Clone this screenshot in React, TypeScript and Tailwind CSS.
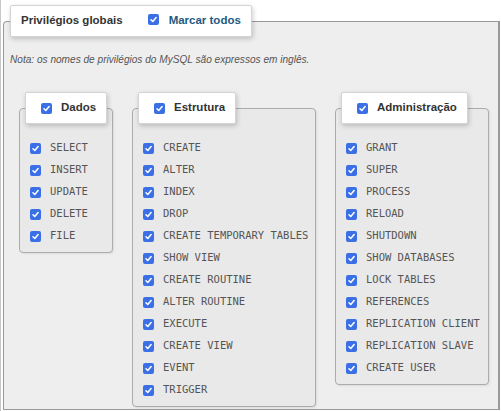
import React from 'react';

const groups = [
  {
    title: 'Dados',
    box: 'w-[94px]',
    items: ['SELECT', 'INSERT', 'UPDATE', 'DELETE', 'FILE'],
  },
  {
    title: 'Estrutura',
    box: 'w-[184px]',
    items: [
      'CREATE',
      'ALTER',
      'INDEX',
      'DROP',
      'CREATE TEMPORARY TABLES',
      'SHOW VIEW',
      'CREATE ROUTINE',
      'ALTER ROUTINE',
      'EXECUTE',
      'CREATE VIEW',
      'EVENT',
      'TRIGGER',
    ],
  },
  {
    title: 'Administração',
    box: 'w-[154px]',
    items: [
      'GRANT',
      'SUPER',
      'PROCESS',
      'RELOAD',
      'SHUTDOWN',
      'SHOW DATABASES',
      'LOCK TABLES',
      'REFERENCES',
      'REPLICATION CLIENT',
      'REPLICATION SLAVE',
      'CREATE USER',
    ],
  },
];

function Check() {
  return (
    <span className="inline-flex h-[11px] w-[11px] shrink-0 items-center justify-center rounded-[2px] bg-[#3b6fe6]">
      <svg viewBox="0 0 10 10" className="h-[9px] w-[9px]">
        <path
          d="M2.2 5.3 L4.2 7.2 L7.9 2.8"
          fill="none"
          stroke="white"
          strokeWidth="1.7"
          strokeLinecap="round"
          strokeLinejoin="round"
        />
      </svg>
    </span>
  );
}

function Legend({ children }: { children: React.ReactNode }) {
  return (
    <div className="relative z-10 flex h-[32px] items-center self-start rounded-[2px] border border-[#d4d4d4] bg-white shadow-[1px_2px_5px_rgba(0,0,0,0.2)]">
      {children}
    </div>
  );
}

function Group({ title, box, items }: { title: string; box: string; items: string[] }) {
  return (
    <div className={`flex flex-col ${box}`}>
      <div className="ml-[6px] flex">
        <Legend>
          <div className="flex items-center gap-[9px] pl-[15px] pr-[10px] text-[11.5px] font-bold text-[#333]">
            <Check />
            <span>{title}</span>
          </div>
        </Legend>
      </div>
      <div className="-mt-[16px] rounded-[4px] border border-[#acacac] bg-[#e9e9e9] pb-[5px] pl-[10px] pt-[28px] shadow-[1px_1px_2px_rgba(0,0,0,0.08)]">
        {items.map((it) => (
          <div key={it} className="flex h-[22px] items-center gap-[9px]">
            <Check />
            <span className="font-['DejaVu_Sans_Mono',monospace] text-[10.5px] text-[#555]">
              {it}
            </span>
          </div>
        ))}
      </div>
    </div>
  );
}

export default function App() {
  return (
    <div className="h-[411px] w-[501px] overflow-hidden border-l border-[#c8c8c8] bg-white pl-[2px] pt-[5px] font-['Liberation_Sans',Arial,sans-serif]">
      <div className="flex flex-col">
        <div className="ml-[7px] flex">
          <Legend>
            <div className="flex h-full items-center pl-[10px] pr-[10px] text-[11.5px] font-bold">
              <span className="text-[#333]">Privilégios globais</span>
              <span className="ml-[25px] mr-[10px]">
                <Check />
              </span>
              <span className="text-[#235a81]">Marcar todos</span>
            </div>
          </Legend>
        </div>
        <div className="-mt-[16px] h-[389px] w-[497px] rounded-tl-[4px] border border-r-2 border-[#9a9a9a] bg-[#eeeeee]">
          <p className="mt-[31px] pl-[6px] text-[10.1px] italic leading-[14px] text-[#555]">
            Nota: os nomes de privilégios do MySQL são expressos em inglês.
          </p>
          <div className="mt-[25px] flex items-start gap-[19px] pl-[15px]">
            {groups.map((g) => (
              <Group key={g.title} {...g} />
            ))}
          </div>
        </div>
      </div>
    </div>
  );
}
